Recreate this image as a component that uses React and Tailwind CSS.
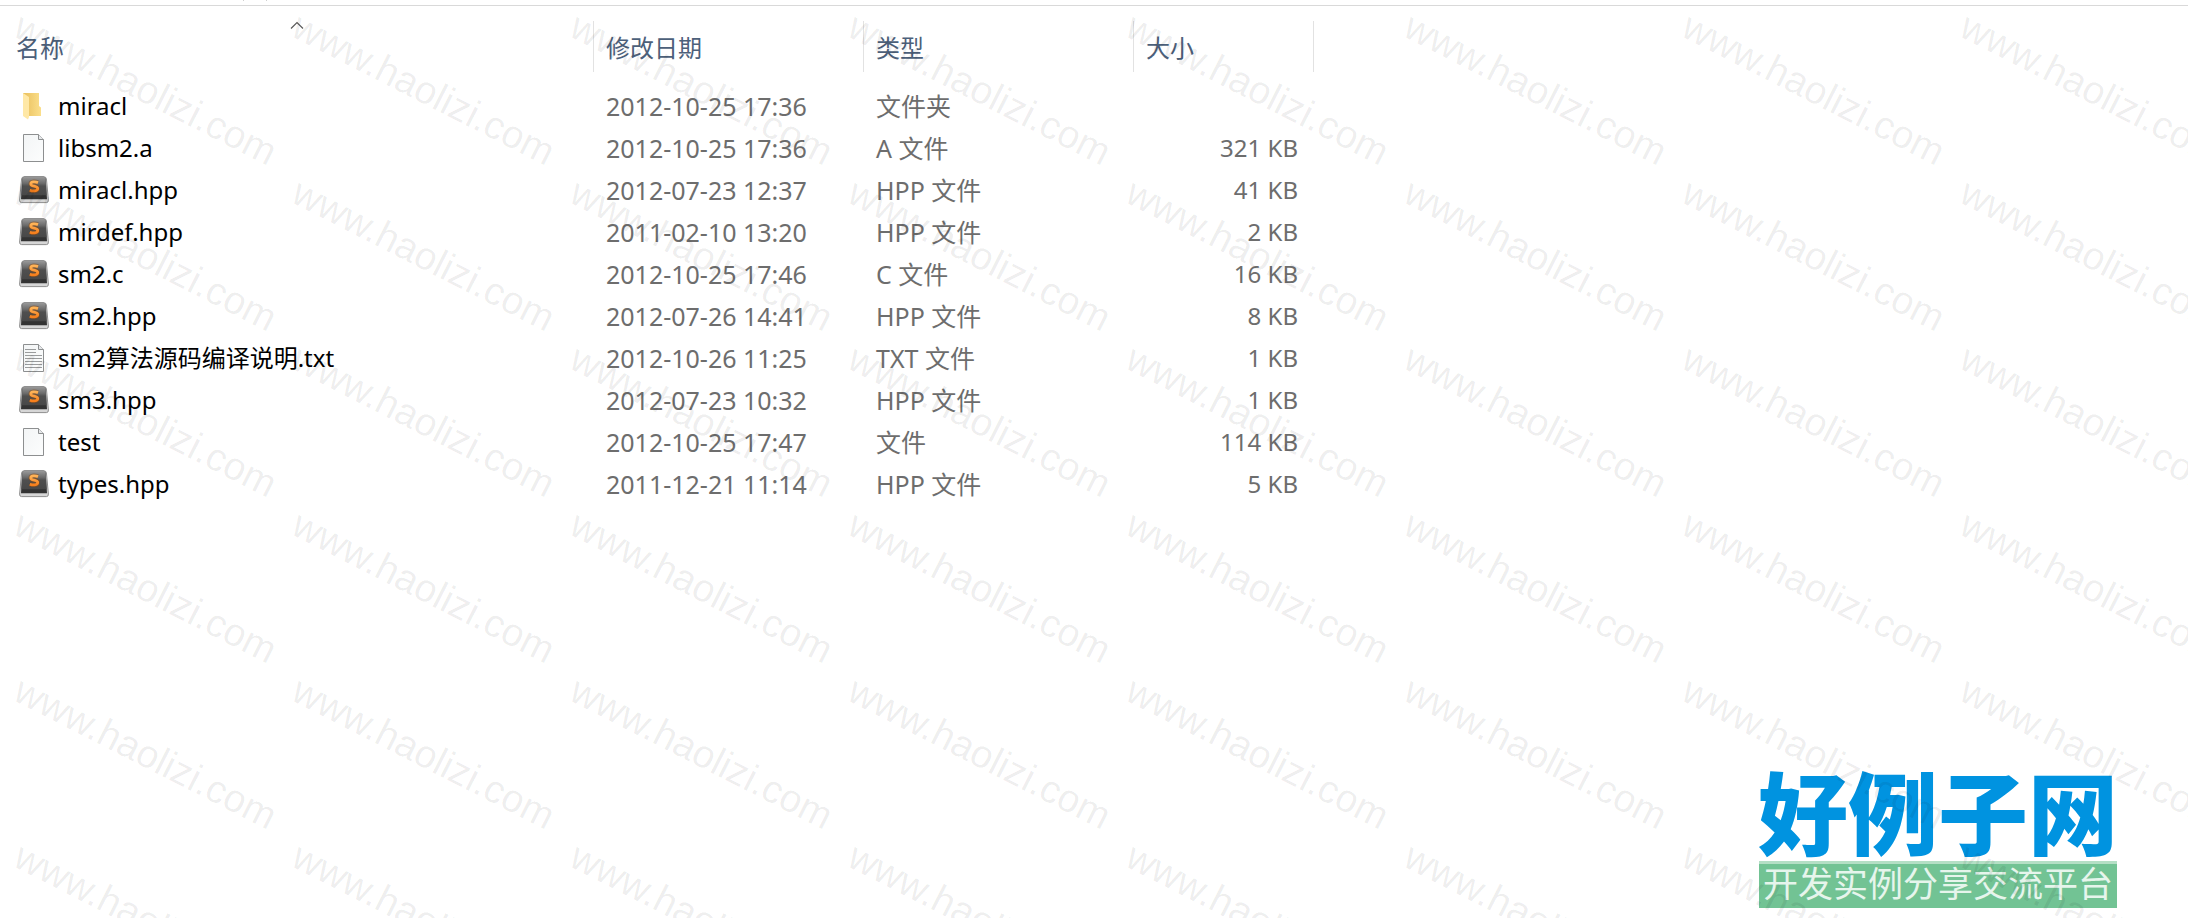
const files = [
  { name: 'miracl', date: '2012-10-25 17:36', type: '文件夹', size: '', icon: 'folder' },
  { name: 'libsm2.a', date: '2012-10-25 17:36', type: 'A 文件', size: '321 KB', icon: 'blank' },
  { name: 'miracl.hpp', date: '2012-07-23 12:37', type: 'HPP 文件', size: '41 KB', icon: 'sublime' },
  { name: 'mirdef.hpp', date: '2011-02-10 13:20', type: 'HPP 文件', size: '2 KB', icon: 'sublime' },
  { name: 'sm2.c', date: '2012-10-25 17:46', type: 'C 文件', size: '16 KB', icon: 'sublime' },
  { name: 'sm2.hpp', date: '2012-07-26 14:41', type: 'HPP 文件', size: '8 KB', icon: 'sublime' },
  { name: 'sm2算法源码编译说明.txt', date: '2012-10-26 11:25', type: 'TXT 文件', size: '1 KB', icon: 'text' },
  { name: 'sm3.hpp', date: '2012-07-23 10:32', type: 'HPP 文件', size: '1 KB', icon: 'sublime' },
  { name: 'test', date: '2012-10-25 17:47', type: '文件', size: '114 KB', icon: 'blank' },
  { name: 'types.hpp', date: '2011-12-21 11:14', type: 'HPP 文件', size: '5 KB', icon: 'sublime' },
];

function FolderIcon() {
  return (
    <svg width="30" height="28" viewBox="0 0 30 28" aria-hidden="true">
      <defs>
        <linearGradient id="folder-back" x1="0" x2="1">
          <stop offset="0" stopColor="#e9bf5c" />
          <stop offset="1" stopColor="#fbdf8c" />
        </linearGradient>
      </defs>
      <path d="M4 1h16v13l2 1.500v8.500H4z" fill="url(#folder-back)" />
      <path d="M4 1l6 4v20l-1 2.500-5-3.500z" fill="#ffe8a6" />
    </svg>
  );
}

function PageIcon({ lines }) {
  return (
    <svg width="30" height="28" viewBox="0 0 30 28" aria-hidden="true">
      <defs>
        <linearGradient id="page-fill" x1="0" y1="0" x2="1" y2="1">
          <stop offset="0" stopColor="#f3f5f6" />
          <stop offset="1" stopColor="#fcfdfd" />
        </linearGradient>
      </defs>
      <path d="M4.500 .5h15l5 5v22h-20z" fill="url(#page-fill)" stroke="#8d8f90" />
      <path d="M19.500 .5v5h5" fill="#e6e8ea" stroke="#8d8f90" />
      {lines && <path d="M6 5.500h11M6 8.500h11M6 11.500h17M6 14.500h17M6 17.500h17M6 20.500h17M6 23.500h17" stroke="#9a9c9d" />}
    </svg>
  );
}

function SublimeIcon() {
  return (
    <svg width="30" height="28" viewBox="0 0 30 28" aria-hidden="true">
      <defs>
        <linearGradient id="key-top" x1="0" y1="0" x2="0" y2="1">
          <stop offset="0" stopColor="#9a9a9a" />
          <stop offset="0.35" stopColor="#6c6c6c" />
          <stop offset="0.5" stopColor="#4f4f4f" />
          <stop offset="1" stopColor="#484848" />
        </linearGradient>
        <linearGradient id="key-s" x1="0" y1="0" x2="0" y2="1">
          <stop offset="0" stopColor="#ffb458" />
          <stop offset="1" stopColor="#f77f1c" />
        </linearGradient>
      </defs>
      <path d="M5 .8h20q2 0 2.400 2L29.400 24q.2 2.600-2 2.600H2.600q-2.200 0-2-2.600L2.600 2.800Q3 .8 5 .8z" fill="#d6d6d6" stroke="#8f8f8f" />
      <path d="M5.500 .8h19q1.800 0 2.200 2l1.300 20.500H2L3.300 2.800q.4-2 2.200-2z" fill="#333" />
      <path d="M5.500 .8h19q1.800 0 2.200 2l.8 16.500h-25L3.300 2.800q.4-2 2.200-2z" fill="url(#key-top)" />
      <path d="M19 6.600c-2.200-.9-7.200-1.500-7.200 1.300 0 3 6.900 1.400 6.900 4.700 0 3.100-5.200 2.600-7.900 1.600" fill="none" stroke="#8a4a12" strokeOpacity=".5" strokeWidth="4.600" />
      <path d="M19 6.600c-2.200-.9-7.200-1.500-7.200 1.300 0 3 6.900 1.400 6.900 4.700 0 3.100-5.200 2.600-7.900 1.600" fill="none" stroke="url(#key-s)" strokeWidth="2.800" />
    </svg>
  );
}

function FileIcon({ kind }) {
  if (kind === 'folder') return <FolderIcon />;
  if (kind === 'sublime') return <SublimeIcon />;
  return <PageIcon lines={kind === 'text'} />;
}

function HeaderCell({ children, sorted, first }) {
  return (
    <th scope="col" aria-sort={sorted ? 'ascending' : undefined} className="h-[79px] p-0 pt-[15px] align-top font-normal">
      <button
        type="button"
        className={`relative flex h-[51px] w-full items-center border-r border-[#e2e2e2] pt-[2px] text-left text-[#4c607a] ${first ? 'pl-4' : 'pl-3'}`}
      >
        {children}
        {sorted && (
          <svg className="absolute top-0 left-1/2 -translate-x-1/2" width="14" height="9" viewBox="0 0 14 9" aria-hidden="true">
            <path d="M1 7.500l6-6 6 6" fill="none" stroke="#5a5a5a" strokeWidth="1.200" />
          </svg>
        )}
      </button>
    </th>
  );
}

function Watermark() {
  return (
    <div aria-hidden="true" className="pointer-events-none absolute inset-0 overflow-hidden">
      {Array.from({ length: 6 }, (_, row) => (
        <div key={row} className="flex h-[166px]">
          {Array.from({ length: 8 }, (_, col) => (
            <div key={col} className="flex w-[278px] shrink-0 items-end pb-32 pl-[10px]">
              <span className="origin-bottom-left rotate-[27deg] whitespace-nowrap font-['Liberation_Sans',sans-serif] text-[39px] leading-8 text-black/7">
                www.haolizi.com
              </span>
            </div>
          ))}
        </div>
      ))}
    </div>
  );
}

export default function App() {
  return (
    <main className="relative flex min-h-screen flex-col overflow-hidden bg-white font-['Noto_Sans','Noto_Sans_CJK_SC',sans-serif] text-[24px] leading-8">
      <div className="flex h-[6px] shrink-0 gap-[22px] border-b border-[#d9d9d9] pl-[243px]">
        <span className="h-px w-px bg-[#d0d0d0]" />
        <span className="h-px w-px bg-[#d0d0d0]" />
      </div>

      <table className="w-[1314px] table-fixed border-collapse">
        <colgroup>
          <col className="w-[594px]" />
          <col className="w-[270px]" />
          <col className="w-[270px]" />
          <col className="w-[180px]" />
        </colgroup>
        <thead>
          <tr>
            <HeaderCell sorted first>名称</HeaderCell>
            <HeaderCell>修改日期</HeaderCell>
            <HeaderCell>类型</HeaderCell>
            <HeaderCell>大小</HeaderCell>
          </tr>
        </thead>
        <tbody>
          {files.map((file) => (
            <tr key={file.name} className="h-[42px] text-[#6d6d6d]">
              <td className="p-0 pl-[19px] text-black">
                <div className="flex items-center gap-[9px]">
                  <FileIcon kind={file.icon} />
                  <span>{file.name}</span>
                </div>
              </td>
              <td className="p-0 pl-3 text-[25px]">{file.date}</td>
              <td className="p-0 pl-3 text-[25px]">{file.type}</td>
              <td className="p-0 pr-4 text-right">{file.size}</td>
            </tr>
          ))}
        </tbody>
      </table>

      <div className="mt-auto mr-[70px] mb-[10px] flex flex-col items-center self-end font-['Noto_Sans_CJK_SC',sans-serif]">
        <p className="pb-1 text-[90px] leading-[96px] font-black text-[#0093e0]">好例子网</p>
        <p className="border-t-[3px] border-[#b4dfc5] bg-[#72c394] px-1 pb-2 text-[35px] leading-9 text-[#e6f5ec]">开发实例分享交流平台</p>
      </div>

      <Watermark />
    </main>
  );
}
